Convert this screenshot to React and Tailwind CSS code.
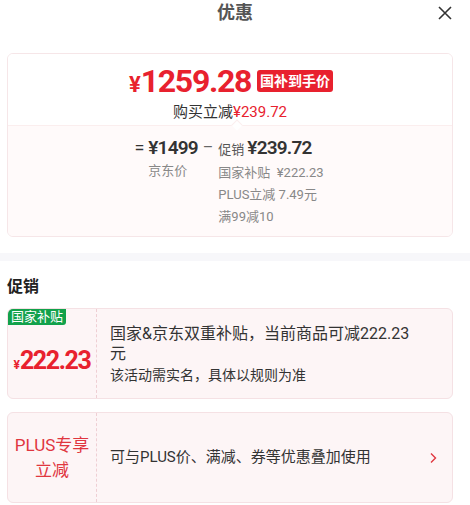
import React from "react";

const font = { fontFamily: 'Roboto, "Noto Sans CJK SC", sans-serif' };

const App = () => {
  return (
    <div className="w-[470px] h-[505px] bg-white overflow-hidden relative" style={font}>
      {/* Header */}
      <div className="relative h-[26px] flex justify-center items-center">
        <h1 className="text-[18px] font-bold text-[#555] leading-none">优惠</h1>
        <svg className="absolute right-[18px] top-[6px]" width="14" height="14" viewBox="0 0 14 14">
          <path d="M1 1L13 13M13 1L1 13" stroke="#333" strokeWidth="1.6" />
        </svg>
      </div>

      {/* Summary card */}
      <div className="mx-[7px] mt-[27px] w-[446px] border border-[#f6e6e8] rounded-[6px] overflow-hidden">
        <div className="bg-white h-[71px] flex flex-col items-center pt-[14px]">
          <div className="flex items-center gap-[6px] h-[26px] ml-[2px]">
            <div className="text-[#e8212e] font-bold leading-none flex items-baseline">
              <span className="text-[22px]">¥</span>
              <span className="text-[32px] tracking-[-1.3px]">1259.28</span>
            </div>
            <span className="bg-[#e8212e] text-white text-[14px] font-bold rounded-[3px] px-[3px] h-[22px] leading-[22px]">
              国补到手价
            </span>
          </div>
          <div className="text-[15px] text-[#333] leading-none mt-[11px]">
            购买立减<span className="text-[#e8212e]">¥239.72</span>
          </div>
        </div>
        <div className="relative bg-[#fffafa] border-t border-[#fbeeee] h-[111px] flex justify-center pt-[10px]">
          <div className="absolute left-[225px] top-[-5px] w-[8px] h-[8px] bg-white border-r border-b border-[#fbeeee] rotate-[225deg]" />
          <div className="flex items-start text-[#333] ml-[-2px]">
            <span className="text-[18px] leading-[24px] mr-[4px]">=</span>
            <div className="flex flex-col">
              <span className="text-[19px] font-semibold leading-[24px] tracking-[-0.8px]">¥1499</span>
              <span className="text-[13px] text-[#888] leading-[22px]">京东价</span>
            </div>
            <span className="text-[16px] leading-[24px] mx-[5px] text-[#666]">–</span>
            <div className="flex flex-col">
              <div className="flex items-baseline leading-[24px]">
                <span className="text-[13px] text-[#555] mr-[3px]">促销</span>
                <span className="text-[19px] font-semibold tracking-[-0.8px]">¥239.72</span>
              </div>
              <span className="text-[13px] text-[#888] leading-[22px]">国家补贴&nbsp;&nbsp;¥222.23</span>
              <span className="text-[13px] text-[#888] leading-[22px]">PLUS立减&nbsp;7.49元</span>
              <span className="text-[13px] text-[#888] leading-[22px]">满99减10</span>
            </div>
          </div>
        </div>
      </div>

      {/* Gray band */}
      <div className="mt-[16px] h-[8px] bg-[#f7f7fa]" />

      {/* Promotions */}
      <div className="px-[7px]">
        <h2 className="text-[16px] font-bold text-[#222] mt-[18px] leading-none">促销</h2>

        <div className="mt-[13px] w-[446px] h-[91px] flex bg-[#fdf5f6] border border-[#f5e1e4] rounded-[6px] overflow-hidden">
          <div className="relative w-[89px] shrink-0 border-r border-dashed border-[#efcfd4] flex items-center justify-center">
            <span className="absolute left-0 top-0 bg-[#12a14b] text-white text-[13px] leading-[16px] px-[3px] rounded-br-[3px]">
              国家补贴
            </span>
            <div className="text-[#e8212e] font-bold flex items-baseline mt-[14px]">
              <span className="text-[12px]">¥</span>
              <span className="text-[25px] tracking-[-1.4px]">222.23</span>
            </div>
          </div>
          <div className="flex flex-col justify-center pl-[13px] pr-[28px] text-[#333]">
            <p className="text-[16px] leading-[20px] mt-[2px]">国家&amp;京东双重补贴，当前商品可减222.23元</p>
            <p className="text-[14px] leading-[20px] mt-[1px]">该活动需实名，具体以规则为准</p>
          </div>
        </div>

        <div className="mt-[13px] w-[446px] h-[91px] flex bg-[#fdf5f6] border border-[#f5e1e4] rounded-[6px] overflow-hidden">
          <div className="w-[89px] shrink-0 border-r border-dashed border-[#efcfd4] flex items-center justify-center text-center">
            <span className="text-[#e0363f] text-[17px] leading-[25px]">
              PLUS专享
              <br />
              立减
            </span>
          </div>
          <div className="flex-1 flex items-center justify-between pl-[13px] pr-[15px]">
            <span className="text-[15px] text-[#333]">可与PLUS价、满减、券等优惠叠加使用</span>
            <svg width="8" height="12" viewBox="0 0 8 12">
              <path d="M2 1.5L6.5 6L2 10.5" stroke="#e0363f" strokeWidth="1.4" fill="none" />
            </svg>
          </div>
        </div>
      </div>
    </div>
  );
};

export default App;
